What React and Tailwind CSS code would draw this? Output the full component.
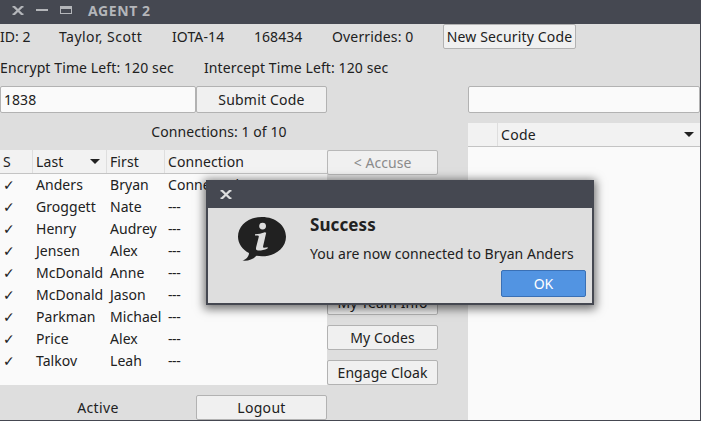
import React from "react";

const people = [
  ["Anders", "Bryan", "Connected"],
  ["Groggett", "Nate", "---"],
  ["Henry", "Audrey", "---"],
  ["Jensen", "Alex", "---"],
  ["McDonald", "Anne", "---"],
  ["McDonald", "Jason", "---"],
  ["Parkman", "Michael", "---"],
  ["Price", "Alex", "---"],
  ["Talkov", "Leah", "---"],
];

function Button({ className = "", children }) {
  return (
    <button className={`flex shrink-0 items-center justify-center whitespace-nowrap rounded-[2px] border border-[#b2b2b2] bg-[#f0f0f0] ${className}`}>
      {children}
    </button>
  );
}

function SortArrow() {
  return (
    <svg width="10" height="5" viewBox="0 0 10 5" className="shrink-0 fill-[#212121]">
      <path d="M0 0H10L5 5Z" />
    </svg>
  );
}

function CloseIcon({ className = "" }) {
  return (
    <svg width="12" height="9" viewBox="0 0 12 9" fill="none" className={`shrink-0 ${className}`}>
      <path d="M0.5 .7H2.3L9.7 8.3H11.5M11.5 .7H9.7L2.3 8.3H.5" strokeWidth="1.5" />
      <path d="M2 .8L10 8.2M10 .8L2 8.2" strokeWidth="2.2" />
    </svg>
  );
}

function Dialog() {
  return (
    <div className="absolute left-[206px] top-[180px] flex h-[125px] w-[388px] flex-col border-2 border-t-0 border-[#454851] bg-[#dedede] shadow-[0_2px_9px_2px_rgba(0,0,0,0.55)]">
      <div className="flex h-7 shrink-0 items-center bg-[#454851] pl-3">
        <CloseIcon className="stroke-[#dedede]" />
      </div>
      <div className="flex pl-[30px] pt-[9px]">
        <svg width="48" height="45" viewBox="0 0 48 45" className="shrink-0">
          <path d="M24 0C37.5 0 48 8.5 48 19.7S37.5 39.3 24 39.3L18.5 38.7C15 42.3 10 44.3 4.5 43.6C8.5 42 11 39.5 11 36C4.5 32.5 0 26.7 0 19.7C0 8.5 10.5 0 24 0Z" fill="#212121" />
          <circle cx="24.6" cy="9.1" r="3.4" fill="#dedede" />
          <path d="M17 17.2C20.5 17.2 23.5 16.4 26.8 15.2L28.2 15.7L25.2 28.8C24.8 30.6 25.2 30.9 26.4 30.7L29.8 30.2L29.5 31.5C26 33 22.8 33.7 20 33.5C17.7 33.3 17.8 31.7 18.3 29.5L20.8 19.8C21.1 18.5 19.9 18.2 17 18.6Z" fill="#dedede" />
        </svg>
        <div className="flex flex-col pl-6">
          <h2 className="h-4 whitespace-nowrap text-[17px] font-bold leading-4 tracking-[0.1px]">Success</h2>
          <p className="mt-[13px] h-4 whitespace-nowrap leading-4 tracking-[0.03px]">You are now connected to Bryan Anders</p>
        </div>
      </div>
      <button className="mr-1.5 mt-auto mb-1.5 flex h-[27px] w-[85px] shrink-0 items-center justify-center self-end rounded-[2px] border border-[#3a70b5] bg-[#5294e2] text-white">
        OK
      </button>
    </div>
  );
}

export default function App() {
  return (
    <div className="relative flex h-[421px] w-[701px] flex-col overflow-hidden border-b border-r border-[#454851] bg-[#dedede] font-['Noto_Sans',sans-serif] text-[14px] leading-[22px] tracking-[0.05px] text-[#212121]">
      <header className="flex h-6 w-[701px] shrink-0 items-center bg-[#454851] pl-3 pb-1 font-bold text-[#b4b6ba]">
        <CloseIcon className="stroke-[#b4b6ba]" />
        <div className="ml-3 h-0.5 w-3 bg-[#b4b6ba]" />
        <div className="ml-3 h-2 w-3 border border-t-[3px] border-[#b4b6ba]" />
        <h1 className="ml-4 pt-0.5 tracking-[0.6px]">AGENT 2</h1>
      </header>

      <div className="flex h-[25px] shrink-0 items-center whitespace-nowrap">
        <span className="w-[59px]">ID: 2</span>
        <span className="w-[113px] tracking-[0.43px]">Taylor, Scott</span>
        <span className="w-[82px] tracking-[0.1px]">IOTA-14</span>
        <span className="w-[78px]">168434</span>
        <span className="w-[111px] tracking-[0.15px]">Overrides: 0</span>
        <Button className="h-[25px] w-[133px] tracking-[0.16px]">New Security Code</Button>
      </div>

      <div className="flex h-[37px] shrink-0 items-center whitespace-nowrap tracking-[0.11px]">
        <span className="w-[204px]">Encrypt Time Left: 120 sec</span>
        <span>Intercept Time Left: 120 sec</span>
      </div>

      <div className="flex min-h-0 flex-1">
        <main className="w-[468px] shrink-0">
          <div className="flex h-[27px]">
            <div className="flex w-[196px] items-center rounded-[2px] border border-[#b2b2b2] bg-[#fafafa] pl-[3px]">1838</div>
            <Button className="w-[131px] tracking-[0.2px]">Submit Code</Button>
          </div>
          <div className="flex h-[37px] w-[438px] items-center justify-center tracking-[0.08px]">Connections: 1 of 10</div>
          <div className="flex h-[235px]">
            <section className="w-[327px] bg-[#fafafa]">
              <div className="flex h-6 border-b border-[#c4c4c4] bg-[#f2f2f2] leading-6 tracking-[0.1px]">
                <span className="w-[33px] border-r border-[#dedede] pl-[3px]">S</span>
                <span className="flex w-[74px] items-center justify-between border-r border-[#dedede] pl-[3px] pr-1.5">
                  Last
                  <SortArrow />
                </span>
                <span className="w-[58px] border-r border-[#dedede] pl-[3px]">First</span>
                <span className="pl-[3px]">Connection</span>
              </div>
              {people.map(([last, first, status], i) => (
                <div key={i} className="flex h-[22px] items-center whitespace-nowrap">
                  <span className="w-9 pl-[3px] font-['DejaVu_Sans',sans-serif] text-[14px]">✓</span>
                  <span className="w-[74px]">{last}</span>
                  <span className="w-[58px]">{first}</span>
                  <span className={status === "---" ? "tracking-[-0.4px]" : ""}>{status}</span>
                </div>
              ))}
            </section>
            <div className="flex w-[111px] flex-col">
              <Button className="h-[25px] border-[#b8b8b8] bg-[#c8c8c8] text-[#8b8b8b]">&lt; Accuse</Button>
              <Button className="mt-auto h-[25px]">My Team Info</Button>
              <Button className="mt-2.5 h-[25px]">My Codes</Button>
              <Button className="mt-2.5 h-[25px]">Engage Cloak</Button>
            </div>
          </div>
          <div className="flex pt-2.5">
            <span className="flex w-[196px] items-center justify-center tracking-[0.4px]">Active</span>
            <Button className="h-[25px] w-[131px] tracking-[0.3px]">Logout</Button>
          </div>
        </main>

        <aside className="flex min-w-0 flex-1 flex-col">
          <div className="h-[27px] shrink-0 rounded-[2px] border border-[#b2b2b2] bg-[#fafafa]" />
          <section className="mt-2.5 flex-1 bg-[#fafafa]">
            <div className="flex h-6 border-b border-[#c4c4c4] bg-[#f2f2f2] leading-6 tracking-[0.3px]">
              <span className="w-[30px] border-r border-[#dedede]" />
              <span className="flex flex-1 items-center justify-between pl-[3px] pr-1.5">
                Code
                <SortArrow />
              </span>
            </div>
          </section>
        </aside>
      </div>

      <Dialog />
    </div>
  );
}
